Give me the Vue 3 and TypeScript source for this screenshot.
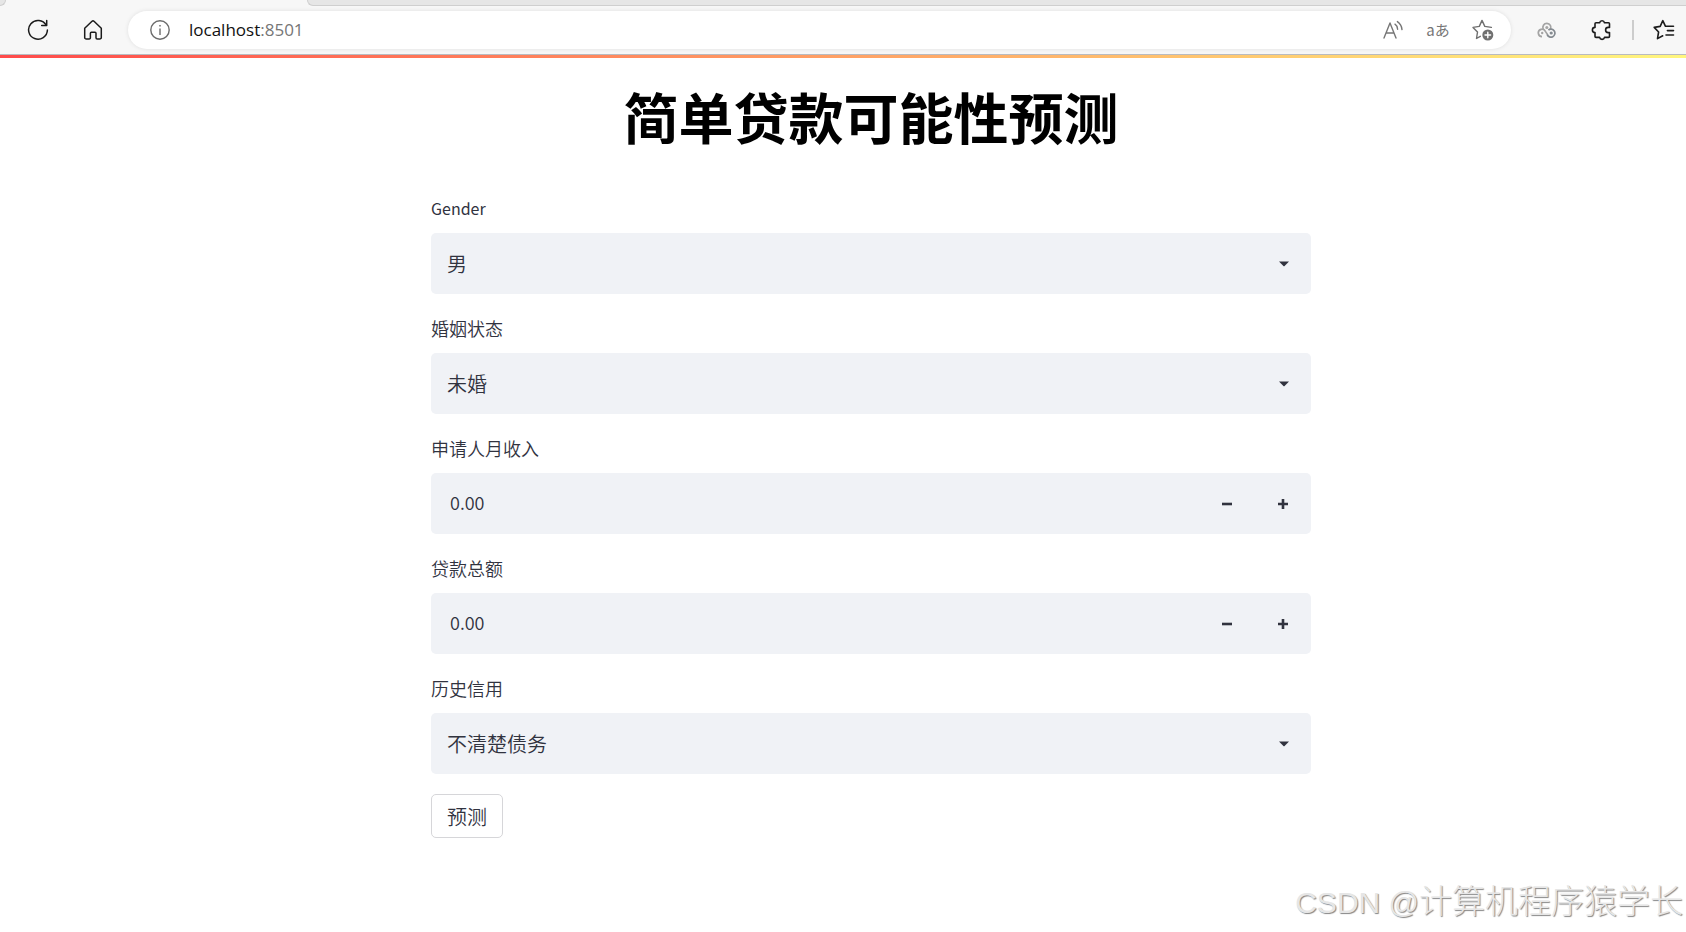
<script setup lang="ts">
import { ref } from 'vue'

interface Field {
  id: string
  label: string
  lang: string
  kind: 'select' | 'number'
  options: string[]
}

const fields: Field[] = [
  { id: 'gender', label: 'Gender', lang: 'en', kind: 'select', options: ['男', '女'] },
  { id: 'marital', label: '婚姻状态', lang: 'zh', kind: 'select', options: ['未婚', '已婚'] },
  { id: 'income', label: '申请人月收入', lang: 'zh', kind: 'number', options: [] },
  { id: 'amount', label: '贷款总额', lang: 'zh', kind: 'number', options: [] },
  { id: 'credit', label: '历史信用', lang: 'zh', kind: 'select', options: ['不清楚债务', '清楚债务'] },
]

const values = ref<Record<string, string>>({
  gender: '男',
  marital: '未婚',
  income: '0.00',
  amount: '0.00',
  credit: '不清楚债务',
})

function step(id: string, delta: number): void {
  const next = Math.max(0, (Number(values.value[id]) || 0) + delta)
  values.value[id] = next.toFixed(2)
}
</script>

<template>
  <div class="page">
    <header class="browser">
      <div class="tabs"><span class="tab-left"></span><span class="tab-active"></span><span class="tab-rest"></span></div>
      <div class="toolbar">
        <button class="icon" type="button" aria-label="Refresh">
          <svg width="22" height="22" viewBox="0 0 22 22" fill="none" stroke="#1b1b1b" stroke-width="1.5" stroke-linecap="round" stroke-linejoin="round">
            <path d="M19.2 6.2A9.4 9.4 0 1 0 20.4 11" /><path d="M19.7 1.5v5h-5" />
          </svg>
        </button>
        <button class="icon" type="button" aria-label="Home">
          <svg width="22" height="22" viewBox="0 0 22 22" fill="none" stroke="#1b1b1b" stroke-width="1.5" stroke-linejoin="round">
            <path d="M2.7 9.2 10 2.3a1.5 1.5 0 0 1 2 0l7.3 6.9v9.2a1.6 1.6 0 0 1-1.6 1.6h-2.5a1.2 1.2 0 0 1-1.2-1.2v-4.6a1 1 0 0 0-1-1h-3.6a1 1 0 0 0-1 1v4.6A1.2 1.2 0 0 1 7 20H4.3a1.6 1.6 0 0 1-1.6-1.6z" />
          </svg>
        </button>
        <div class="address">
          <svg width="20" height="20" viewBox="0 0 20 20" fill="none" stroke="#6b6b6b" stroke-width="1.4">
            <circle cx="10" cy="10" r="9.2" /><path d="M10 8.5V15" /><circle cx="10" cy="5.8" r=".5" fill="#6b6b6b" stroke-width=".8" />
          </svg>
          <a class="url" href="http://localhost:8501">localhost<span>:8501</span></a>
          <button class="icon" type="button" aria-label="Read aloud">
            <svg width="22" height="20" viewBox="0 0 22 20" fill="none" stroke="#767676" stroke-width="1.4" stroke-linecap="round" stroke-linejoin="round">
              <path d="M2 18 8 3l6 15M4 13h8M13 4.2q2.4 1.6 2.6 5M15.4 1.6q4.2 2.8 4.6 8" />
            </svg>
          </button>
          <button class="icon translate" type="button" aria-label="Translate">aあ</button>
          <button class="icon" type="button" aria-label="Add to favorites">
            <svg width="22" height="22" viewBox="0 0 22 22" fill="none" stroke="#707070" stroke-width="1.4" stroke-linejoin="round" stroke-linecap="round">
              <path d="M8.3 17.3 4.5 19.5l1-6.4L1 8.4l6.3-1L10 1.4l2.8 6 6.6 1" />
              <circle cx="15.8" cy="16" r="5.5" fill="#707070" stroke="none" /><path d="M15.8 13.2v5.6M13 16h5.6" stroke="#fff" />
            </svg>
          </button>
        </div>
        <button class="icon" type="button" aria-label="Extension">
          <svg width="20" height="16" viewBox="0 0 20 16" fill="none" stroke-width="1.7">
            <path d="M6.3 7.2a4 4 0 1 1 7 .2" stroke="#a4a4a4" />
            <path d="M5 14.6a3.7 3.7 0 1 1 3.4-5.2l2.4 3.6" stroke="#a4a4a4" />
            <path d="M10.2 12.6a4 4 0 1 0 1.2-4.6" stroke="#858b91" />
            <circle cx="9.8" cy="5.4" r="1.5" fill="#a4a4a4" /><circle cx="5.2" cy="11" r="1.2" fill="#a4a4a4" /><circle cx="14.2" cy="11" r="1.6" fill="#858b91" />
          </svg>
        </button>
        <button class="icon" type="button" aria-label="Extensions">
          <svg width="22" height="22" viewBox="0 0 22 22" fill="none" stroke="#1b1b1b" stroke-width="1.6" stroke-linejoin="round">
            <path d="M5 3.8h3.6a2.5 2.5 0 0 1 4.9 0h4a1 1 0 0 1 1 1v3.6h-1.3a2.6 2.6 0 0 0 0 5.2h1.3v3.8a1 1 0 0 1-1 1h-4a2.5 2.5 0 0 1-4.9 0H5a1 1 0 0 1-1-1v-3.8a2.6 2.6 0 0 1 0-5.2V4.8a1 1 0 0 1 1-1z" />
          </svg>
        </button>
        <span class="divider"></span>
        <button class="icon" type="button" aria-label="Favorites">
          <svg width="22" height="22" viewBox="0 0 22 22" fill="none" stroke="#1b1b1b" stroke-width="1.6" stroke-linejoin="round" stroke-linecap="round">
            <path d="M20.5 7.3h-8L9.8 1.6 7.2 7.4 1.2 8.4l4.4 4.6-1.1 6.6 5.2-2.8M14.4 11.6h6.1M13 16h7.5" />
          </svg>
        </button>
      </div>
    </header>
    <div class="accent"></div>
    <main>
      <form @submit.prevent>
        <h1>简单贷款可能性预测</h1>
        <div v-for="f in fields" :key="f.id" class="field">
          <label :for="f.id" :lang="f.lang">{{ f.label }}</label>
          <div class="box">
            <template v-if="f.kind === 'select'">
              <select :id="f.id" v-model="values[f.id]">
                <option v-for="o in f.options" :key="o">{{ o }}</option>
              </select>
              <svg class="caret" width="10" height="6" viewBox="0 0 10 6"><path d="M0 .5h10L5.6 5q-.6.6-1.2 0z" fill="#31333f" /></svg>
            </template>
            <template v-else>
              <input :id="f.id" v-model="values[f.id]" type="text" inputmode="decimal" />
              <button class="step" type="button" aria-label="Decrease" @click="step(f.id, -1)">
                <svg width="10" height="10" viewBox="0 0 10 10"><path d="M0 5h10" stroke="#31333f" stroke-width="2.6" /></svg>
              </button>
              <button class="step" type="button" aria-label="Increase" @click="step(f.id, 1)">
                <svg width="10" height="10" viewBox="0 0 10 10"><path d="M0 5h10M5 0v10" stroke="#31333f" stroke-width="2.6" /></svg>
              </button>
            </template>
          </div>
        </div>
        <button class="submit" type="submit">预测</button>
      </form>
    </main>
    <div class="watermark">CSDN @<span>计算机程序猿学长</span></div>
  </div>
</template>

<style>
body {
  margin: 0;
  background: #fff;
}
</style>

<style scoped>
.page {
  position: relative;
  min-height: 100vh;
  overflow: hidden;
  color: #31333f;
  font-family: "Noto Sans CJK SC", sans-serif;
}
button,
input,
select {
  margin: 0;
  padding: 0;
  border: 0;
  background: none;
  color: inherit;
  font-family: inherit;
}
.browser {
  background: #f7f7f7;
  border-bottom: 1px solid #b9bbc0;
}
.tabs {
  display: flex;
  height: 6px;
}
.tab-left {
  width: 6px;
  background: #e6e6e6;
  border: solid #cfcfcf;
  border-width: 0 1px 1px 0;
  border-radius: 0 0 6px 0;
  box-sizing: border-box;
}
.tab-active {
  width: 301px;
}
.tab-rest {
  flex: 1;
  box-sizing: border-box;
  background: #e6e6e6;
  border: solid #cfcfcf;
  border-width: 0 0 1px 1px;
  border-radius: 0 0 0 6px;
}
.toolbar {
  display: flex;
  align-items: center;
  height: 48px;
  padding: 0 11px 0 27px;
}
.icon {
  display: flex;
  align-items: center;
  justify-content: center;
  width: 22px;
  height: 24px;
  flex: none;
}
.icon + .icon {
  margin-left: 33px;
}
.address {
  display: flex;
  flex: 1;
  align-items: center;
  height: 38px;
  margin: 0 25px 0 24px;
  padding: 0 17px 0 22px;
  border-radius: 19px;
  background: #fff;
  box-shadow: 0 0 4px #0000001a;
}
.url {
  flex: 1;
  margin-left: 19px;
  color: #111;
  font: 17px/24px "Open Sans", "Noto Sans", sans-serif;
  text-decoration: none;
}
.url span {
  color: #767676;
}
.address .icon + .icon {
  margin-left: 23px;
}
.address .translate {
  color: #767676;
  font-size: 15px;
  line-height: 22px;
  white-space: nowrap;
}
.divider {
  width: 2px;
  height: 20px;
  margin: 0 19px;
  background: #cdcdcd;
}
.accent {
  height: 3px;
  background: linear-gradient(90deg, #ff4b4b, #fffd80 104%);
}
main {
  padding: 0 16px 0 72px;
}
form {
  max-width: 880px;
  margin: 0 auto;
}
h1 {
  margin: 0;
  padding: 24px 0 46px;
  color: #000;
  font-size: 55px;
  font-weight: 700;
  line-height: 66px;
  text-align: center;
}
.field {
  margin-bottom: 20px;
}
label {
  display: block;
  padding-bottom: 11px;
  font-size: 18px;
  line-height: 28px;
  font-weight: 350;
}
label:lang(en) {
  font-size: 16px;
  font-weight: 400;
}
.box {
  position: relative;
  display: flex;
  height: 61px;
  border-radius: 5px;
  background: #f0f2f6;
}
select {
  appearance: none;
  flex: 1;
  padding: 0 56px 0 16px;
  font-size: 20px;
  font-weight: 350;
}
.caret {
  position: absolute;
  top: 28px;
  right: 22px;
  pointer-events: none;
}
input {
  flex: 1;
  min-width: 0;
  padding: 0 19px 4px;
  font-size: 18px;
  font-weight: 350;
}
.step {
  display: flex;
  align-items: center;
  justify-content: center;
  width: 56px;
}
.submit {
  height: 44px;
  padding: 0 15px;
  border: 1px solid #d6d6d9;
  border-radius: 5px;
  background: #fff;
  font-size: 20px;
  font-weight: 350;
}
.watermark {
  position: absolute;
  right: 3px;
  bottom: 9px;
  color: #e6e6e6;
  font-family: "Liberation Sans", "Noto Sans CJK SC", sans-serif;
  font-size: 30px;
  line-height: 40px;
  text-shadow: 1px 1px 1px #858585;
  white-space: nowrap;
}
.watermark span {
  font-size: 33px;
  font-weight: 300;
}
</style>
